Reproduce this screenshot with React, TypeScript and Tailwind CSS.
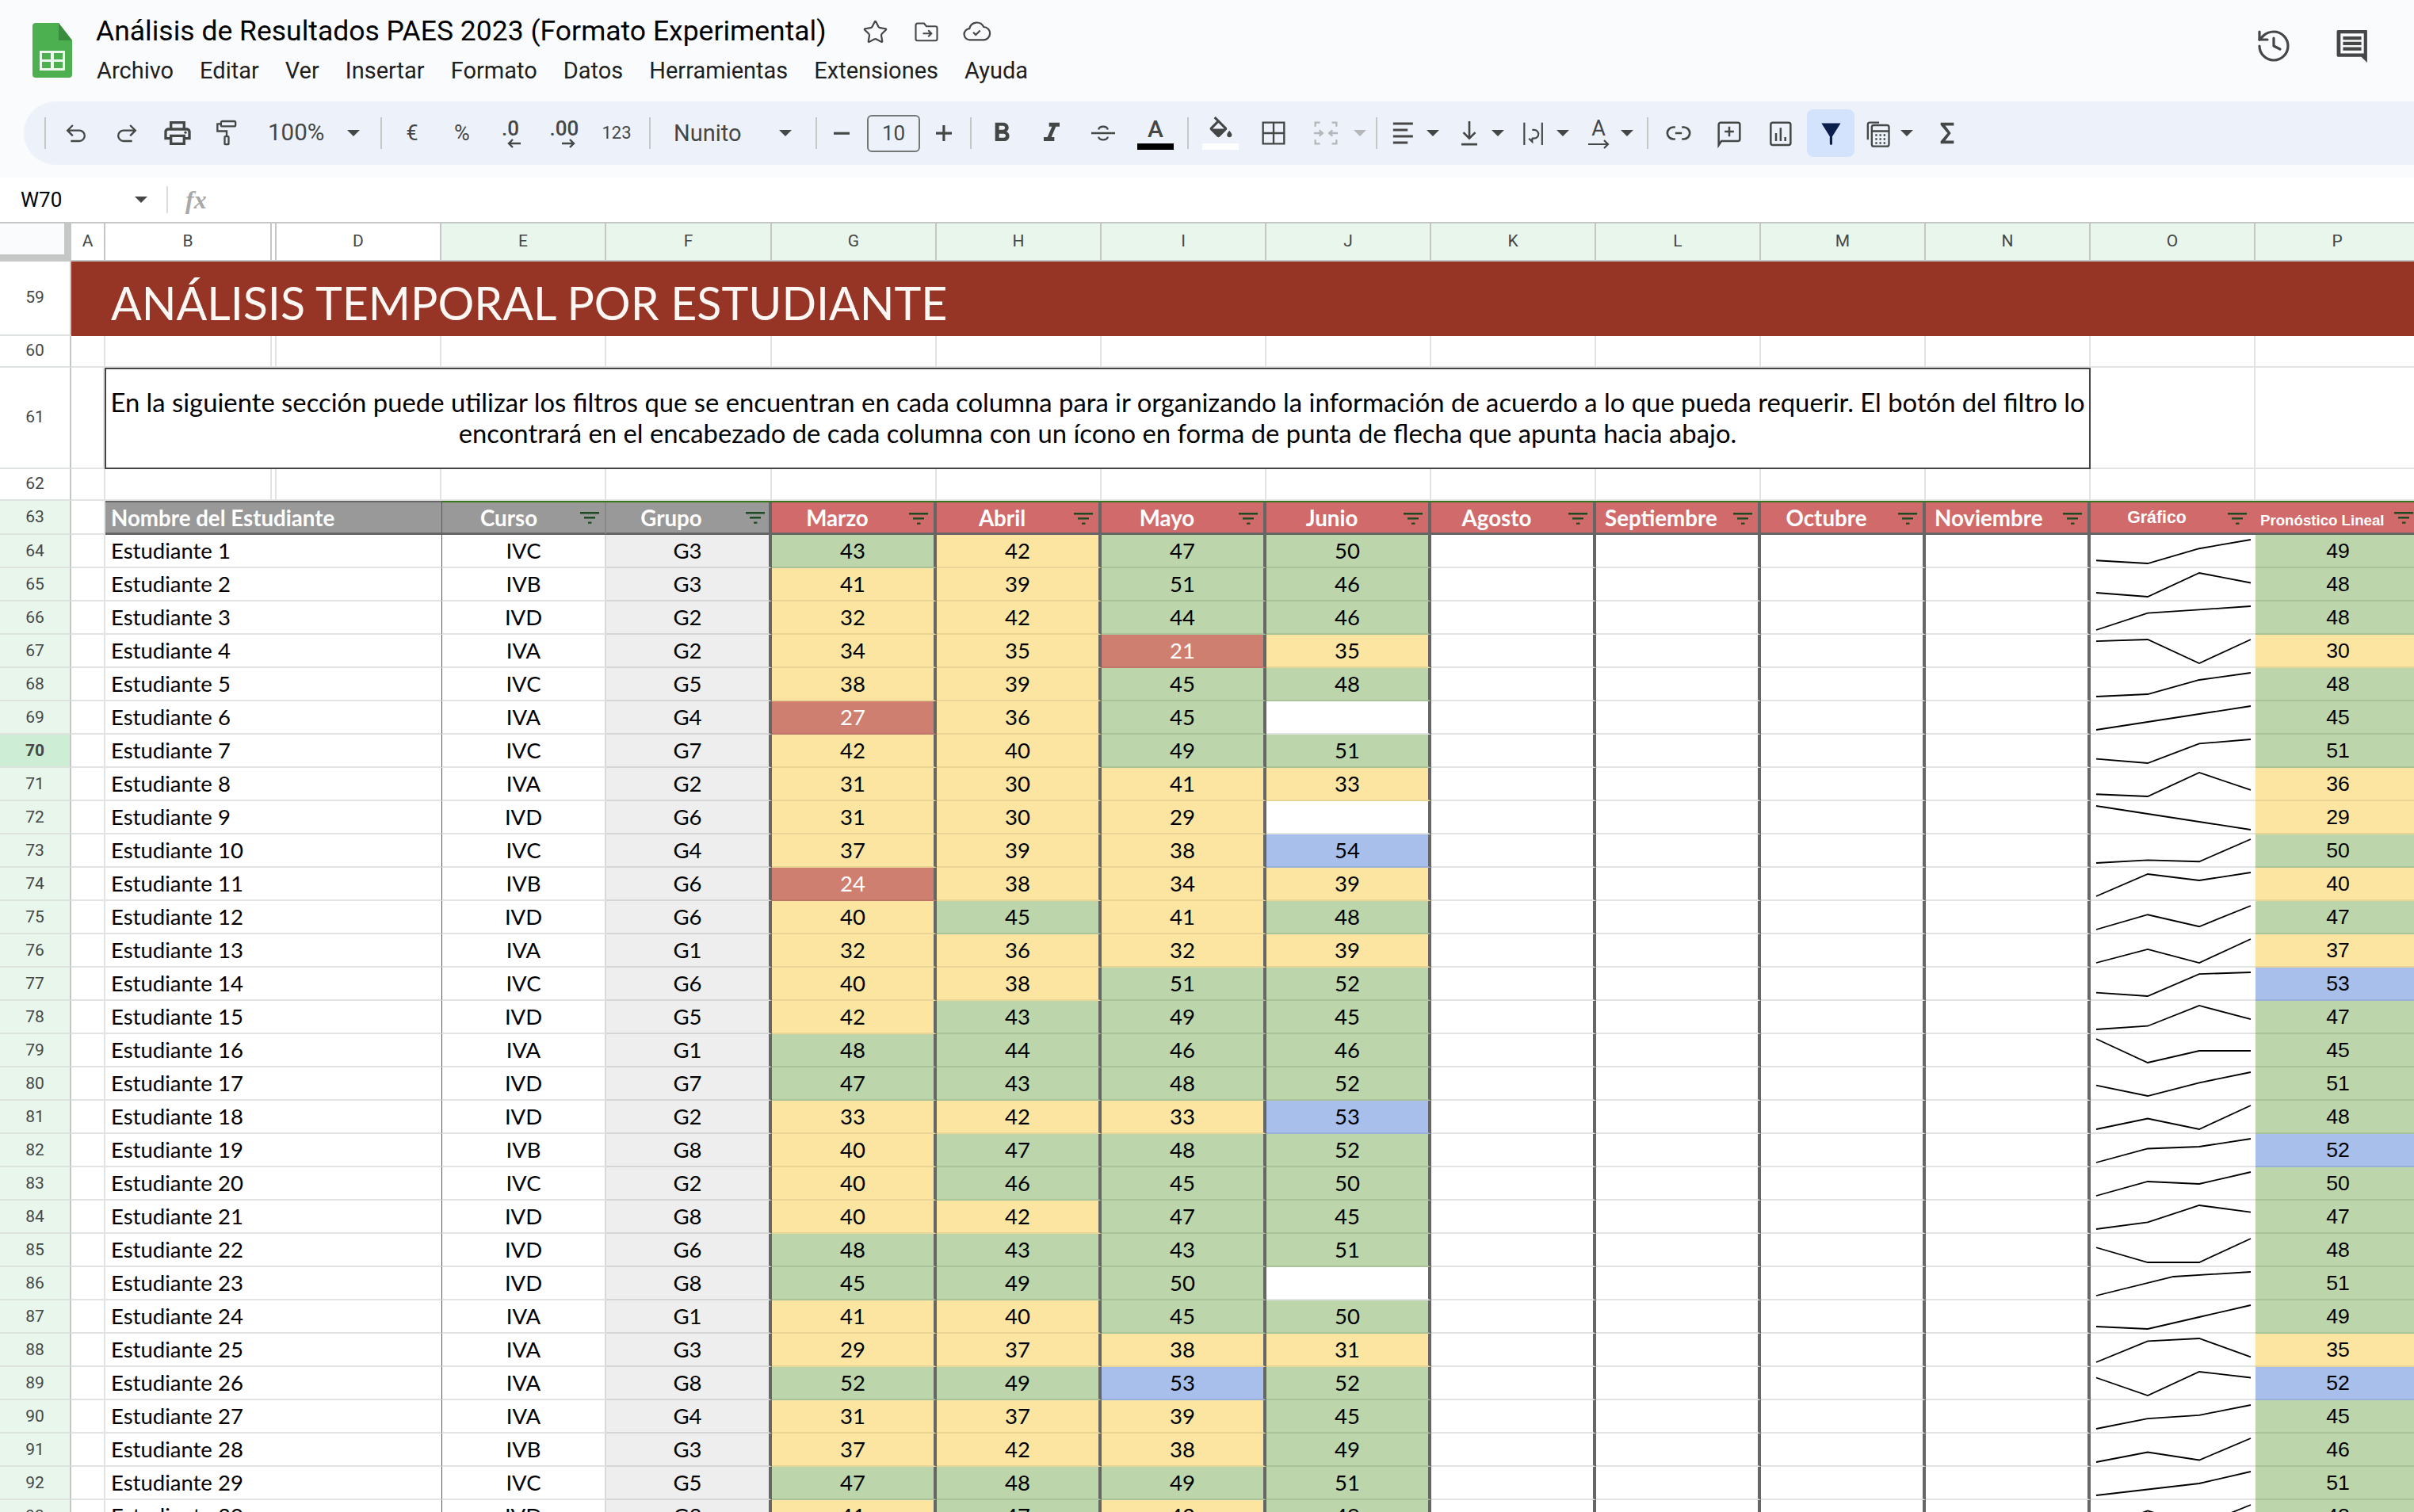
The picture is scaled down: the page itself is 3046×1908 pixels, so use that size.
import React from "react";
import { History, Star } from "lucide-react";

type Student = [string, string, number | null, number | null, number | null, number | null, number];

// curso, grupo, marzo, abril, mayo, junio, pronostico
const STUDENTS: Student[] = [
  ["IVC", "G3", 43, 42, 47, 50, 49],
  ["IVB", "G3", 41, 39, 51, 46, 48],
  ["IVD", "G2", 32, 42, 44, 46, 48],
  ["IVA", "G2", 34, 35, 21, 35, 30],
  ["IVC", "G5", 38, 39, 45, 48, 48],
  ["IVA", "G4", 27, 36, 45, null, 45],
  ["IVC", "G7", 42, 40, 49, 51, 51],
  ["IVA", "G2", 31, 30, 41, 33, 36],
  ["IVD", "G6", 31, 30, 29, null, 29],
  ["IVC", "G4", 37, 39, 38, 54, 50],
  ["IVB", "G6", 24, 38, 34, 39, 40],
  ["IVD", "G6", 40, 45, 41, 48, 47],
  ["IVA", "G1", 32, 36, 32, 39, 37],
  ["IVC", "G6", 40, 38, 51, 52, 53],
  ["IVD", "G5", 42, 43, 49, 45, 47],
  ["IVA", "G1", 48, 44, 46, 46, 45],
  ["IVD", "G7", 47, 43, 48, 52, 51],
  ["IVD", "G2", 33, 42, 33, 53, 48],
  ["IVB", "G8", 40, 47, 48, 52, 52.5],
  ["IVC", "G2", 40, 46, 45, 50, 50],
  ["IVD", "G8", 40, 42, 47, 45, 47],
  ["IVD", "G6", 48, 43, 43, 51, 48],
  ["IVD", "G8", 45, 49, 50, null, 51],
  ["IVA", "G1", 41, 40, 45, 50, 49],
  ["IVA", "G3", 29, 37, 38, 31, 35],
  ["IVA", "G8", 52, 49, 53, 52, 52.5],
  ["IVA", "G4", 31, 37, 39, 45, 45],
  ["IVB", "G3", 37, 42, 38, 49, 46],
  ["IVC", "G5", 47, 48, 49, 51, 51],
  ["IVD", "G3", 41, 47, 42, 49, 48],
];

const NUNITO = "font-['Lato','Noto_Sans',sans-serif]";
const CHROME = "font-['Roboto','Liberation_Sans',sans-serif]";
const ARIAL = "font-['Liberation_Sans',Arial,sans-serif]";

const COLUMNS = [
  { l: "A", w: "w-[43px]", on: false },
  { l: "B", w: "w-[210px]", on: false },
  { l: "", w: "w-[6px]", on: false },
  { l: "D", w: "w-[208px]", on: false },
  { l: "E", w: "w-[208px]", on: true },
  { l: "F", w: "w-[209px]", on: true },
  { l: "G", w: "w-[208px]", on: true },
  { l: "H", w: "w-[208px]", on: true },
  { l: "I", w: "w-[208px]", on: true },
  { l: "J", w: "w-[208px]", on: true },
  { l: "K", w: "w-[208px]", on: true },
  { l: "L", w: "w-[208px]", on: true },
  { l: "M", w: "w-[208px]", on: true },
  { l: "N", w: "w-[208px]", on: true },
  { l: "O", w: "w-[208px]", on: true },
  { l: "P", w: "w-[208px]", on: true },
];

// score bands from the sheet's conditional formatting
function band(v: number | null) {
  if (v === null) return "bg-white border-b-[#e2e3e3]";
  if (v >= 52.5) return "bg-[#a8bfec] border-b-[#9aafd8]";
  if (v >= 43) return "bg-[#bcd5ab] border-b-[#a9c29a]";
  if (v >= 28) return "bg-[#fbe5a1] border-b-[#e9d596]";
  return "bg-[#ce7f70] border-b-[#c0766a] text-white";
}

function Svg({ children, className = "w-[40px] h-[40px]", box = "0 0 24 24", fill = "#444746" }: { children: React.ReactNode; className?: string; box?: string; fill?: string }) {
  return (
    <svg viewBox={box} fill={fill} className={`block shrink-0 ${className}`}>
      {children}
    </svg>
  );
}

function Line({ children, className = "w-[40px] h-[40px]", color = "#444746", sw = 1.4 }: { children: React.ReactNode; className?: string; color?: string; sw?: number }) {
  return (
    <svg viewBox="0 0 24 24" fill="none" stroke={color} strokeWidth={sw} className={`block shrink-0 ${className}`}>
      {children}
    </svg>
  );
}

function Sep({ className }: { className: string }) {
  return <div className={`h-[40px] w-[2px] shrink-0 bg-[#c7c7c7] ${className}`} />;
}

function Caret({ className, color = "border-t-[#444746]" }: { className: string; color?: string }) {
  return (
    <div className={`flex w-[16px] shrink-0 justify-center ${className}`}>
      <div className={`h-0 w-0 border-x-[8px] border-t-[8px] border-x-transparent ${color}`} />
    </div>
  );
}

function Glyph({ className, children }: { className: string; children: React.ReactNode }) {
  return <div className={`w-[40px] shrink-0 text-center text-[27px] leading-none text-[#444746] ${className}`}>{children}</div>;
}

function Toolbar() {
  return (
    <div className={`ml-[30px] flex h-[80px] items-center rounded-l-[40px] bg-[#edf2fa] ${CHROME}`}>
      <Sep className="ml-[26px]" />
      <div className="ml-[18px]">
        <Line>
          <path d="M9.5 6 5.5 10l4 4M5.5 10h9a4 4 0 0 1 0 8H8" />
        </Line>
      </div>
      <div className="ml-[24px]">
        <Line>
          <path d="M14.5 6l4 4-4 4M18.5 10h-9a4 4 0 0 0 0 8H16" />
        </Line>
      </div>
      <div className="ml-[24px]">
        <Svg>
          <path d="M19 8h-1V3H6v5H5c-1.66 0-3 1.34-3 3v6h4v4h12v-4h4v-6c0-1.66-1.34-3-3-3zM8 5h8v3H8V5zm8 12v2H8v-4h8v2zm2-2v-2H6v2H4v-4c0-.55.45-1 1-1h14c.55 0 1 .45 1 1v4h-2z" />
          <circle cx="18" cy="11.5" r="1" />
        </Svg>
      </div>
      <div className="ml-[22px]">
        <Line>
          <rect x="7.7" y="3" width="11" height="3.8" rx="1" />
          <path d="M7.7 5H5v5.5h7V14" />
          <rect x="10.5" y="14.5" width="3" height="6" rx=".6" />
        </Line>
      </div>
      <div className="ml-[32px] w-[72px] shrink-0 text-[29.5px] leading-none whitespace-nowrap text-[#444746]">100%</div>
      <Caret className="ml-[28px]" />
      <Sep className="ml-[26px]" />
      <Glyph className="ml-[18px]">€</Glyph>
      <Glyph className="ml-[23px]">%</Glyph>
      <div className="ml-[21px] flex w-[40px] shrink-0 flex-col items-center text-[#444746]">
        <span className="text-[26px] leading-[26px] font-medium">.0</span>
        <svg viewBox="0 0 18 12" className="ml-[10px] h-[12px] w-[18px]" fill="none" stroke="#444746" strokeWidth="2.4">
          <path d="M7 1 2 6l5 5M2 6h15" />
        </svg>
      </div>
      <div className="ml-[28px] flex w-[40px] shrink-0 flex-col items-center text-[#444746]">
        <span className="text-[26px] leading-[26px] font-medium">.00</span>
        <svg viewBox="0 0 18 12" className="ml-[10px] h-[12px] w-[18px]" fill="none" stroke="#444746" strokeWidth="2.4">
          <path d="M11 1l5 5-5 5M16 6H1" />
        </svg>
      </div>
      <Glyph className="ml-[26px] !text-[22px]">123</Glyph>
      <Sep className="ml-[21px]" />
      <div className="ml-[29px] w-[101px] shrink-0 text-[29px] leading-none text-[#444746]">Nunito</div>
      <Caret className="ml-[32px]" />
      <Sep className="ml-[30px]" />
      <div className="ml-[11px]">
        <Svg>
          <path d="M6 11.2h12v1.9H6z" />
        </Svg>
      </div>
      <div className="ml-[12px] flex h-[47px] w-[67px] shrink-0 items-center justify-center rounded-[6px] border-2 border-[#747775] text-[26px] text-[#444746]">10</div>
      <div className="ml-[10px]">
        <Svg>
          <path d="M11 6h1.9v5.1H18V13h-5.1v5H11v-5H6v-1.9h5z" />
        </Svg>
      </div>
      <Sep className="ml-[13px]" />
      <div className="ml-[18px]">
        <Svg>
          <path d="M15.6 10.79c.97-.67 1.65-1.77 1.65-2.79 0-2.26-1.75-4-4-4H7v14h7.04c2.09 0 3.71-1.7 3.71-3.79 0-1.52-.86-2.82-2.15-3.42zM10 6.5h3c.83 0 1.5.67 1.5 1.5s-.67 1.5-1.5 1.5h-3v-3zm3.5 9H10v-3h3.5c.83 0 1.5.67 1.5 1.5s-.67 1.5-1.5 1.5z" />
        </Svg>
      </div>
      <div className="ml-[23px]">
        <Svg>
          <path d="M10 4v3h2.21l-3.42 8H6v3h8v-3h-2.21l3.42-8H18V4z" />
        </Svg>
      </div>
      <div className="ml-[25px]">
        <Line>
          <path d="M3 12h18M8.5 9.3c.5-3 6.500-3 7 0M8.500 14.800c.5 3 6.500 3 7 0" />
        </Line>
      </div>
      <div className="ml-[23px] flex w-[46px] shrink-0 flex-col items-center">
        <span className="h-[32px] text-[30px] leading-[32px] font-medium text-[#444746]">A</span>
        <div className="mt-[2px] h-[8px] w-full bg-black" />
      </div>
      <Sep className="ml-[17px]" />
      <div className="ml-[17px] flex w-[46px] shrink-0 flex-col items-center">
        <Svg className="h-[27px] w-[37px]" box="0 0 24 17.5">
          <path d="M16.56 8.94 7.62 0 6.21 1.41l2.38 2.38-5.150 5.150c-.59.59-.59 1.54 0 2.12l5.5 5.5c.29.29.68.44 1.06.44s.77-.15 1.06-.44l5.5-5.5c.59-.58.59-1.53 0-2.12zM5.210 10 10 5.210 14.790 10H5.210zM19 11.500s-2 2.170-2 3.500c0 1.100.9 2 2 2s2-.9 2-2c0-1.330-2-3.500-2-3.500z" />
        </Svg>
        <div className="mt-[7px] h-[8px] w-full bg-white" />
      </div>
      <div className="ml-[24px]">
        <Line sw={1.4}>
          <path d="M4 4h16v16H4zM12 4v16M4 12h16" />
        </Line>
      </div>
      <div className="ml-[26px]">
        <Line color="#b4b6b8">
          <path d="M7.500 4H4v3M16.500 4H20v3M7.500 20H4v-3M16.500 20H20v-3M3 12h6M7 9.800 9.500 12 7 14.200M21 12h-6M17 9.800 14.500 12l2.500 2.200" />
        </Line>
      </div>
      <Caret className="ml-[15px]" color="border-t-[#b4b6b8]" />
      <Sep className="ml-[12px]" />
      <div className="ml-[14px]">
        <Line sw={1.7}>
          <path d="M3.500 4.800h15M3.500 9.600h11M3.500 14.400h15M3.500 19.200h11" />
        </Line>
      </div>
      <Caret className="ml-[8px]" />
      <div className="ml-[18px]">
        <Line sw={1.6}>
          <path d="M12 3v13M7.500 11.500 12 16l4.500-4.500M6 20.500h12" />
        </Line>
      </div>
      <Caret className="ml-[8px]" />
      <div className="ml-[17px]">
        <Line sw={1.3}>
          <path d="M5 4v17M18.500 4v17M8.500 16l2.500 2.500-.1-2.500M11 9.500h1.500a3 3 0 0 1 0 6.500h-1.800" />
        </Line>
      </div>
      <Caret className="ml-[9px]" />
      <div className="ml-[17px] flex w-[40px] shrink-0 flex-col items-center">
        <span className="text-[27px] leading-[28px] text-[#444746]">A</span>
        <svg viewBox="0 0 28 12" className="h-[12px] w-[28px]" fill="none" stroke="#444746" strokeWidth="2.2">
          <path d="M1 6h25M21 1l5 5-5 5" />
        </svg>
      </div>
      <Caret className="ml-[8px]" />
      <Sep className="ml-[17px]" />
      <div className="ml-[18px]">
        <Line sw={1.6}>
          <path d="M9.500 7.500H8a4.500 4.500 0 0 0 0 9h1.500M14.500 7.500H16a4.500 4.500 0 0 1 0 9h-1.500M9.500 12h5" />
        </Line>
      </div>
      <div className="ml-[24px]">
        <Line sw={1.5}>
          <path d="M4 19.500V5.500a1.500 1.500 0 0 1 1.500-1.500h13A1.500 1.500 0 0 1 20 5.500v11a1.500 1.500 0 0 1-1.500 1.500H6L4 21zM12 7v7.500M8.500 10.800h7" />
        </Line>
      </div>
      <div className="ml-[24px]">
        <Line sw={1.5}>
          <rect x="5" y="4" width="15" height="17" rx="1.500" />
          <path d="M9 12v6M12.500 8v10M16 15v3" />
        </Line>
      </div>
      <div className="ml-[14px] flex h-[60px] w-[60px] shrink-0 items-center justify-center rounded-[8px] bg-[#d3e3fd]">
        <Svg className="h-[40px] w-[40px]" fill="#0b1f4f">
          <path d="M5 4.500h14.500l-6.300 10V20a.9.9 0 0 1-1.900 0v-5.500z" />
        </Svg>
      </div>
      <div className="ml-[11px]">
        <Line sw={1.4}>
          <path d="M3.500 17V5.500A1.500 1.500 0 0 1 5 4h7" />
          <rect x="6.500" y="6" width="13" height="16" rx="1.500" />
          <path d="M6.500 10.500h13M9.200 13.500h1.400M12.300 13.500h1.400M15.400 13.500h1.400M9.200 16.500h1.400M12.300 16.500h1.400M15.400 16.500h1.400M9.200 19.500h1.400M12.300 19.500h1.400M15.400 19.500h1.400" />
        </Line>
      </div>
      <Caret className="ml-[7px]" />
      <div className="ml-[23px]">
        <Svg>
          <path d="M17 4H7v1.800l5.200 6.200L7 18.200V20h10v-2.300h-6.500l4.300-5.700-4.300-5.700H17z" />
        </Svg>
      </div>
    </div>
  );
}

function TopBar() {
  const menu = ["Archivo", "Editar", "Ver", "Insertar", "Formato", "Datos", "Herramientas", "Extensiones", "Ayuda"];
  return (
    <header className={`h-[224px] shrink-0 bg-[#f9fbfd] ${CHROME}`}>
      <div className="flex h-[128px]">
        <svg viewBox="0 0 50 69" className="mt-[29px] ml-[41px] h-[69px] w-[50px] shrink-0">
          <path d="M4 0h29l17 22v43a4 4 0 0 1-4 4H4a4 4 0 0 1-4-4V4a4 4 0 0 1 4-4z" fill="#4caf50" />
          <path d="M33 0l17 22-17 0z" fill="#388e3c" />
          <path d="M9 35h32v25H9zM12 38v8h11v-8zM27 38v8h11v-8zM12 49v8h11v-8zM27 49v8h11v-8z" fill="#eef7ee" fillRule="evenodd" />
        </svg>
        <div className="ml-[30px] flex w-[1130px] shrink-0 flex-col">
          <div className="mt-[15px] flex h-[50px] items-center">
            <span className="text-[35.5px] leading-none whitespace-nowrap text-black">Análisis de Resultados PAES 2023 (Formato Experimental)</span>
            <Star className="ml-[45px] shrink-0 text-[#444746]" size={33} strokeWidth={1.6} />
            <div className="ml-[30px]">
              <Line className="h-[36px] w-[36px]">
                <path d="M3 6.500A1.500 1.500 0 0 1 4.500 5H10l2 2.500h7.500A1.500 1.500 0 0 1 21 9v9a1.500 1.500 0 0 1-1.500 1.500h-15A1.500 1.500 0 0 1 3 18zM9 13.500h7M13.500 10.800l2.700 2.700-2.700 2.700" />
              </Line>
            </div>
            <div className="ml-[26px]">
              <Line className="h-[38px] w-[38px]">
                <path d="M7 18.500a4.500 4.500 0 0 1-.5-9 6 6 0 0 1 11.300-1.300A5 5 0 0 1 17.500 18.500zM9.500 12.500l2 2 3.500-3.500" />
              </Line>
            </div>
          </div>
          <nav className="mt-[1px] ml-[1px] flex h-[46px] items-center gap-[33px] text-[29px] leading-none whitespace-nowrap text-[#1f1f1f]">
            {menu.map((m) => (
              <span key={m}>{m}</span>
            ))}
          </nav>
        </div>
        <div className="ml-auto flex items-start pt-[34px] pr-[57px]">
          <History size={48} strokeWidth={1.6} className="text-[#444746]" />
          <svg viewBox="0 0 40 40" className="mt-[3px] ml-[54px] h-[42px] w-[42px]" fill="none">
            <path d="M3 1h34a1 1 0 0 1 1 1v38l-7-7H3a1.500 1.500 0 0 1-1.500-1.500V2.500A1.500 1.500 0 0 1 3 1z" fill="#444746" />
            <path d="M6 5h28v24H6z" fill="#f9fbfd" />
            <path d="M9 8.500h22v4H9zM9 15h22v4H9zM9 21.500h22v4H9z" fill="#444746" />
          </svg>
        </div>
      </div>
      <Toolbar />
    </header>
  );
}

function FormulaBar() {
  return (
    <div className={`flex h-[58px] shrink-0 items-center border-b-2 border-[#c4c7c5] bg-white ${CHROME}`}>
      <span className="ml-[26px] w-[140px] text-[26px] text-black">W70</span>
      <Caret className="ml-[4px]" />
      <div className="ml-[24px] h-[34px] w-[2px] bg-[#dadce0]" />
      <span className="ml-[22px] font-['Liberation_Serif',serif] text-[32px] font-bold text-[#a8a8a8] italic">fx</span>
    </div>
  );
}

function ColumnLetters() {
  return (
    <div className={`flex h-[48px] shrink-0 border-b-2 border-[#c4c7c5] text-[21px] text-[#444746] ${CHROME}`}>
      <div className="w-[90px] shrink-0 border-r-[9px] border-b-[7px] border-[#c4c7c5] bg-[#f9fbfd]" />
      {COLUMNS.map((c, i) => (
        <div key={i} className={`${c.w} flex shrink-0 items-center justify-center border-r-2 border-[#c4c7c5] ${c.on ? "bg-[#e9f6ec]" : "bg-white"}`}>
          {c.l}
        </div>
      ))}
    </div>
  );
}

function RowNum({ n, on }: { n: number; on?: boolean }) {
  const bg = n === 70 ? "bg-[#cdeed5] font-bold" : on ? "bg-[#e9f6ec] font-normal" : "bg-white font-normal";
  return <div className={`flex w-[90px] shrink-0 items-center justify-center border-r-2 border-b-2 border-r-[#c4c7c5] border-b-[#dfe3e0] text-[21px] text-[#444746] ${CHROME} ${bg}`}>{n}</div>;
}

function BlankRow({ n, height }: { n: number; height: string }) {
  return (
    <div className={`flex shrink-0 ${height}`}>
      <RowNum n={n} />
      {COLUMNS.map((c, i) => (
        <div key={i} className={`${c.w} shrink-0 border-r-2 border-b-2 border-[#e2e3e3] bg-white`} />
      ))}
    </div>
  );
}

function FilterIcon() {
  return (
    <svg viewBox="0 0 24 15" className="h-[15px] w-[24px] shrink-0" fill="#1d4a22">
      <path d="M0 0h24v2.400H0zM5 6h14v2.400H5zM10 12.400h4.500v2.400H10z" />
    </svg>
  );
}

function HeaderRow() {
  const months = ["Marzo", "Abril", "Mayo", "Junio", "Agosto", "Septiembre", "Octubre", "Noviembre"];
  return (
    <div className={`flex h-[43px] shrink-0 text-[27.7px] leading-none font-bold text-white ${NUNITO}`}>
      <RowNum n={63} on />
      <div className="w-[43px] shrink-0 border-r-2 border-b-2 border-[#e2e3e3] bg-white" />
      <div className="flex w-[424px] shrink-0 items-center border-t-2 border-b-[3px] border-t-[#666666] border-b-[#666666] bg-[#999999] pt-[1px] pl-[7px]">Nombre del Estudiante</div>
      <div className="flex flex-1 border-t-2 border-t-[#38761d]">
        <div className="flex w-[208px] shrink-0 items-center gap-[6px] border-r-2 border-b-[3px] border-l border-r-[#888888] border-b-[#666666] border-l-[#38761d] bg-[#999999] pt-[1px] pr-[7px]">
          <span className="flex-1 text-center">Curso</span>
          <FilterIcon />
        </div>
        <div className="flex w-[209px] shrink-0 items-center gap-[12px] border-r-4 border-b-[3px] border-r-[#666666] border-b-[#666666] bg-[#999999] pt-[1px] pr-[5px]">
          <span className="flex-1 text-center">Grupo</span>
          <FilterIcon />
        </div>
        {months.map((m) => {
          const wide = m === "Septiembre" || m === "Noviembre";
          return (
            <div key={m} className="flex w-[208px] shrink-0 items-center border-r-4 border-b-[3px] border-r-[#666666] border-b-[#666666] bg-[#d16b6b] pt-[2px] pr-[7px]">
              <span className={`flex-1 whitespace-nowrap ${wide ? "pl-[11px] text-left" : "pr-[8px] text-center"}`}>{m}</span>
              <FilterIcon />
            </div>
          );
        })}
        <div className={`flex w-[208px] shrink-0 items-center border-b-[3px] border-b-[#666666] bg-[#d16b6b] pt-[2px] pr-[11px] text-[21.33px] ${ARIAL}`}>
          <span className="flex-1 pr-[6px] text-center">Gráfico</span>
          <FilterIcon />
        </div>
        <div className={`flex w-[208px] shrink-0 items-center border-b-[3px] border-b-[#666666] bg-[#d16b6b] pl-[6px] text-[18.67px] whitespace-nowrap ${ARIAL}`}>
          <span className="mt-[8px]">Pronóstico Lineal</span>
          <span className="ml-[12px]">
            <FilterIcon />
          </span>
        </div>
      </div>
    </div>
  );
}

function Sparkline({ values }: { values: number[] }) {
  const min = Math.min(...values);
  const max = Math.max(...values);
  const step = 195 / (values.length - 1);
  const points = values.map((v, i) => `${7 + i * step},${36 - ((v - min) / (max - min)) * 30}`).join(" ");
  return (
    <svg viewBox="0 0 208 40" className="h-[40px] w-[208px]" fill="none">
      <polyline points={points} stroke="#000000" strokeWidth="1.8" />
    </svg>
  );
}

function DataRow({ n, idx, s }: { n: number; idx: number; s: Student }) {
  const scores = [s[2], s[3], s[4], s[5]];
  return (
    <div className={`flex h-[42px] shrink-0 text-[27.5px] leading-none text-black ${NUNITO}`}>
      <RowNum n={n} on />
      <div className="w-[43px] shrink-0 border-r-2 border-b-2 border-[#e2e3e3] bg-white" />
      <div className="flex w-[424px] shrink-0 items-center border-b-2 border-[#e2e3e3] bg-white pl-[7px]">Estudiante {idx + 1}</div>
      <div className="flex w-[208px] shrink-0 items-center justify-center border-r-2 border-b-2 border-l border-r-[#d9d9d9] border-b-[#e2e3e3] border-l-[#38761d] bg-white">{s[0]}</div>
      <div className="flex w-[209px] shrink-0 items-center justify-center border-r-4 border-b-2 border-r-[#666666] border-b-[#d6d6d6] bg-[#eeeeee]">{s[1]}</div>
      {scores.map((v, i) => (
        <div key={i} className={`flex w-[208px] shrink-0 items-center justify-center border-r-4 border-b-2 border-r-[#666666] ${band(v)}`}>
          {v}
        </div>
      ))}
      {[0, 1, 2, 3].map((i) => (
        <div key={i} className="w-[208px] shrink-0 border-r-4 border-b-2 border-r-[#666666] border-b-[#e2e3e3] bg-white" />
      ))}
      <div className="w-[208px] shrink-0 border-b-2 border-[#e2e3e3] bg-white">
        <Sparkline values={scores.filter((v): v is number => v !== null)} />
      </div>
      <div className={`flex w-[208px] shrink-0 items-center justify-center border-b-2 text-[26.67px] ${ARIAL} ${band(s[6])}`}>{Math.floor(s[6])}</div>
    </div>
  );
}

export default function App() {
  return (
    <div className="flex h-[1908px] w-[3046px] flex-col overflow-hidden bg-white">
      <TopBar />
      <FormulaBar />
      <ColumnLetters />

      {/* banner, row 59 */}
      <div className="flex h-[94px] shrink-0">
        <RowNum n={59} />
        <div className="flex flex-1 items-center bg-[#963426] pt-[10px] pl-[50px] font-['Lato',sans-serif] text-[57.3px] leading-none whitespace-nowrap text-[#fdf7f4]">ANÁLISIS TEMPORAL POR ESTUDIANTE</div>
      </div>
      <BlankRow n={60} height="h-[40px]" />

      {/* merged note, row 61 */}
      <div className="flex h-[128px] shrink-0">
        <RowNum n={61} />
        <div className="w-[42px] shrink-0 border-r-2 border-b-2 border-[#e2e3e3] bg-white" />
        <div className={`flex w-[2506px] shrink-0 flex-col items-center justify-center border-2 border-[#444444] bg-white pb-[2px] text-[32.8px] leading-[39px] whitespace-nowrap text-black ${NUNITO}`}>
          <span>En la siguiente sección puede utilizar los filtros que se encuentran en cada columna para ir organizando la información de acuerdo a lo que pueda requerir. El botón del filtro lo</span>
          <span>encontrará en el encabezado de cada columna con un ícono en forma de punta de flecha que apunta hacia abajo.</span>
        </div>
        <div className="w-[208px] shrink-0 border-r-2 border-b-2 border-[#e2e3e3] bg-white" />
        <div className="w-[208px] shrink-0 border-b-2 border-[#e2e3e3] bg-white" />
      </div>
      <BlankRow n={62} height="h-[40px]" />

      <HeaderRow />
      {STUDENTS.map((s, i) => (
        <DataRow key={i} n={64 + i} idx={i} s={s} />
      ))}
    </div>
  );
}
